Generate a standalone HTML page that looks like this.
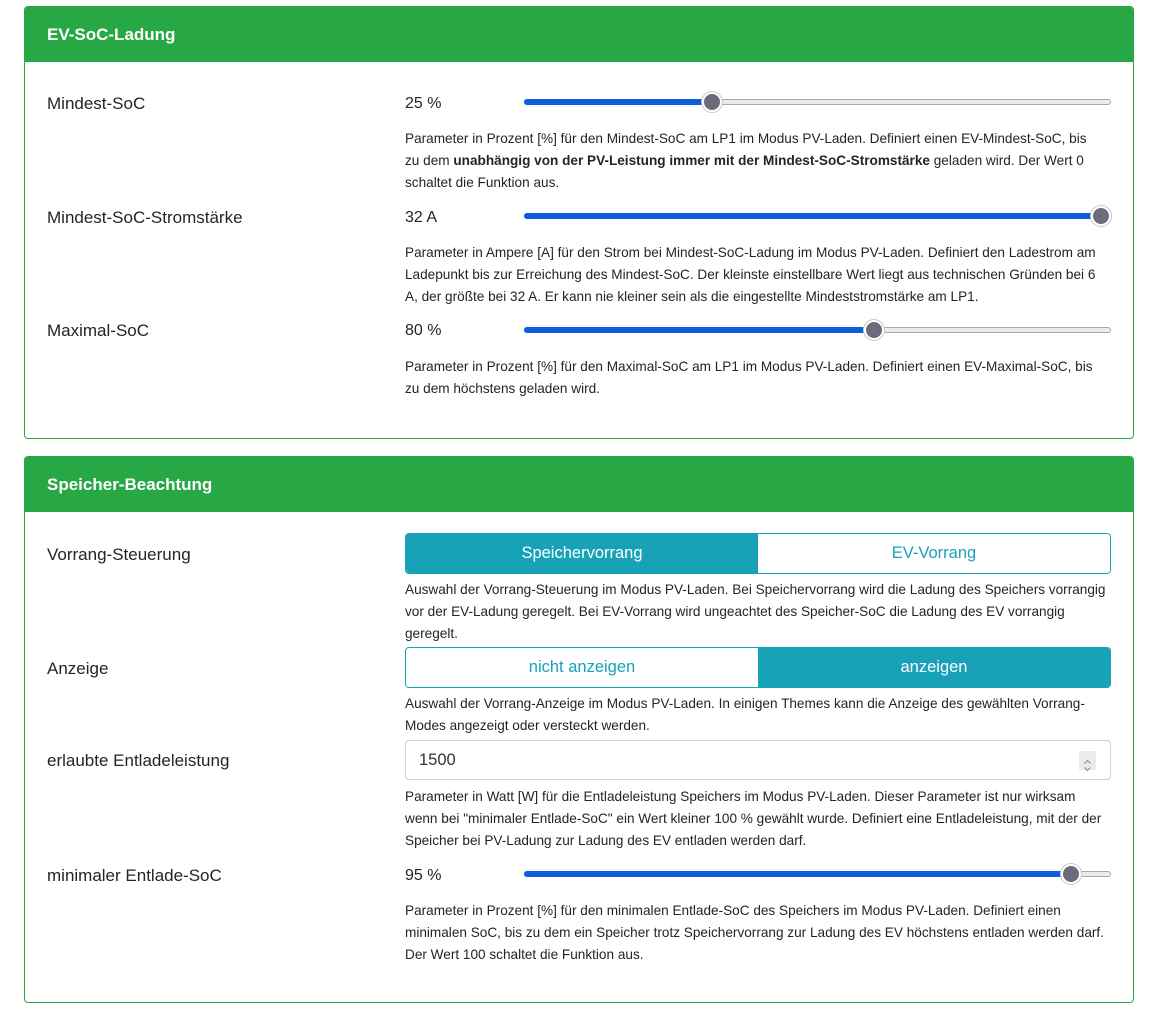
<!DOCTYPE html>
<html><head><meta charset="utf-8"><style>
*{box-sizing:border-box;margin:0;padding:0}
body{width:1163px;height:1014px;background:#fff;font-family:"Liberation Sans",sans-serif;color:#212529;position:relative;overflow:hidden}
.card{position:absolute;left:24px;width:1110px;border:1px solid #28a745;border-radius:4px;overflow:hidden}
.hd{background:#28a745;color:#fff;font-weight:bold;font-size:17px;height:55px;line-height:55px;padding-left:22px}
.a{position:absolute;white-space:nowrap}
.lbl{font-size:17px;left:47px}
.val{font-size:16px;left:405px}
.help{left:405px;font-size:13.6px;line-height:22px}
.help div{white-space:nowrap}
.tr{position:absolute;left:524px;width:587px;height:6px;background:#e9e9ee;border:1px solid #a8a8b0;border-radius:3px}
.fill{position:absolute;left:524px;height:6px;background:#0b5ed7;border-radius:3px}
.th{position:absolute;width:20px;height:20px;border-radius:50%;background:#6b6b7b;border:2px solid #fff;box-shadow:0 0 0 1px #c8c8cc}
.btn{position:absolute;left:405px;width:706px;height:41px;border:1px solid #17a2b8;border-radius:4px;overflow:hidden;display:flex;font-size:16.5px}
.btn div{flex:1;text-align:center;line-height:39px}
.on{background:#17a2b8;color:#fff}.off{color:#17a2b8;background:#fff}
.inp{position:absolute;left:405px;top:740px;width:706px;height:40px;border:1px solid #ced4da;border-radius:4px;font-size:16.5px;line-height:38px;padding-left:13px;color:#333}
.sp{position:absolute;right:14px;top:10px;width:17px;height:19px;background:#ebebeb}
</style></head><body>
<div class="card" style="top:6px;height:433px"><div class="hd">EV-SoC-Ladung</div></div>
<div class="card" style="top:456px;height:547px"><div class="hd">Speicher-Beachtung</div></div>

<div class="a lbl" style="top:94px">Mindest-SoC</div>
<div class="a val" style="top:95px">25 %</div>
<div class="tr" style="top:99px"></div><div class="fill" style="top:99px;width:188px"></div><div class="th" style="left:702px;top:92px"></div>
<div class="a help" style="top:128px"><div>Parameter in Prozent [%] für den Mindest-SoC am LP1 im Modus PV-Laden. Definiert einen EV-Mindest-SoC, bis</div><div>zu dem <b>unabhängig von der PV-Leistung immer mit der Mindest-SoC-Stromstärke</b> geladen wird. Der Wert 0</div><div>schaltet die Funktion aus.</div></div>

<div class="a lbl" style="top:208px">Mindest-SoC-Stromstärke</div>
<div class="a val" style="top:209px">32 A</div>
<div class="tr" style="top:213px"></div><div class="fill" style="top:213px;width:587px"></div><div class="th" style="left:1091px;top:206px"></div>
<div class="a help" style="top:242px"><div>Parameter in Ampere [A] für den Strom bei Mindest-SoC-Ladung im Modus PV-Laden. Definiert den Ladestrom am</div><div>Ladepunkt bis zur Erreichung des Mindest-SoC. Der kleinste einstellbare Wert liegt aus technischen Gründen bei 6</div><div>A, der größte bei 32 A. Er kann nie kleiner sein als die eingestellte Mindeststromstärke am LP1.</div></div>

<div class="a lbl" style="top:321px">Maximal-SoC</div>
<div class="a val" style="top:322px">80 %</div>
<div class="tr" style="top:327px"></div><div class="fill" style="top:327px;width:350px"></div><div class="th" style="left:864px;top:320px"></div>
<div class="a help" style="top:356px"><div>Parameter in Prozent [%] für den Maximal-SoC am LP1 im Modus PV-Laden. Definiert einen EV-Maximal-SoC, bis</div><div>zu dem höchstens geladen wird.</div></div>

<div class="a lbl" style="top:545px">Vorrang-Steuerung</div>
<div class="btn" style="top:533px"><div class="on">Speichervorrang</div><div class="off">EV-Vorrang</div></div>
<div class="a help" style="top:579px"><div>Auswahl der Vorrang-Steuerung im Modus PV-Laden. Bei Speichervorrang wird die Ladung des Speichers vorrangig</div><div>vor der EV-Ladung geregelt. Bei EV-Vorrang wird ungeachtet des Speicher-SoC die Ladung des EV vorrangig</div><div>geregelt.</div></div>

<div class="a lbl" style="top:659px">Anzeige</div>
<div class="btn" style="top:647px"><div class="off">nicht anzeigen</div><div class="on">anzeigen</div></div>
<div class="a help" style="top:693px"><div>Auswahl der Vorrang-Anzeige im Modus PV-Laden. In einigen Themes kann die Anzeige des gewählten Vorrang-</div><div>Modes angezeigt oder versteckt werden.</div></div>

<div class="a lbl" style="top:751px">erlaubte Entladeleistung</div>
<div class="inp">1500<div class="sp"><svg width="17" height="19" viewBox="0 0 17 19"><path d="M5.5 7.5 8.5 4.5 11.5 7.5M5.5 11.5 8.5 14.5 11.5 11.5" fill="none" stroke="#888" stroke-width="1"/></svg></div></div>
<div class="a help" style="top:786px"><div>Parameter in Watt [W] für die Entladeleistung Speichers im Modus PV-Laden. Dieser Parameter ist nur wirksam</div><div>wenn bei "minimaler Entlade-SoC" ein Wert kleiner 100 % gewählt wurde. Definiert eine Entladeleistung, mit der der</div><div>Speicher bei PV-Ladung zur Ladung des EV entladen werden darf.</div></div>

<div class="a lbl" style="top:866px">minimaler Entlade-SoC</div>
<div class="a val" style="top:867px">95 %</div>
<div class="tr" style="top:871px"></div><div class="fill" style="top:871px;width:548px"></div><div class="th" style="left:1061px;top:864px"></div>
<div class="a help" style="top:900px"><div>Parameter in Prozent [%] für den minimalen Entlade-SoC des Speichers im Modus PV-Laden. Definiert einen</div><div>minimalen SoC, bis zu dem ein Speicher trotz Speichervorrang zur Ladung des EV höchstens entladen werden darf.</div><div>Der Wert 100 schaltet die Funktion aus.</div></div>
</body></html>
